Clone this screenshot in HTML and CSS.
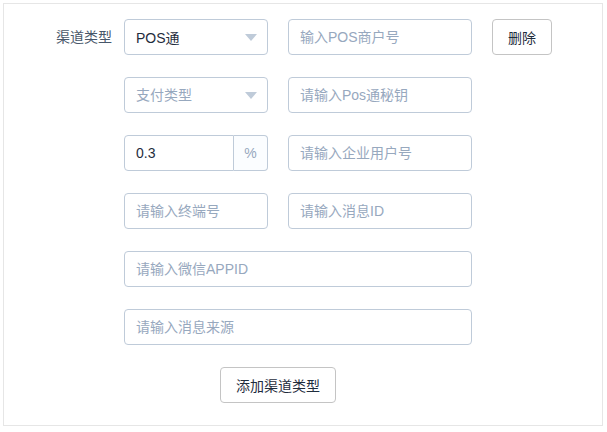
FILE: index.html
```html
<!DOCTYPE html>
<html lang="zh-CN">
<head>
    <meta charset="UTF-8">
    <meta name="viewport" content="width=device-width, initial-scale=1.0">
    <title>渠道类型</title>
    <link rel="stylesheet" href="styles.css">
</head>
<body>
    <div class="panel">
        <div class="form-row">
            <label class="form-label">渠道类型</label>
            <div class="select narrow">
                <input type="text" class="field" value="POS通" readonly>
                <span class="arrow"></span>
            </div>
            <input type="text" class="field wide" placeholder="输入POS商户号">
            <button class="btn">删除</button>
        </div>

        <div class="form-row">
            <span class="form-label"></span>
            <div class="select narrow">
                <input type="text" class="field" placeholder="支付类型" readonly>
                <span class="arrow"></span>
            </div>
            <input type="text" class="field wide" placeholder="请输入Pos通秘钥">
        </div>

        <div class="form-row">
            <span class="form-label"></span>
            <div class="input-group narrow">
                <input type="text" class="field" value="0.3">
                <span class="suffix">%</span>
            </div>
            <input type="text" class="field wide" placeholder="请输入企业用户号">
        </div>

        <div class="form-row">
            <span class="form-label"></span>
            <input type="text" class="field narrow" placeholder="请输入终端号">
            <input type="text" class="field wide" placeholder="请输入消息ID">
        </div>

        <div class="form-row">
            <span class="form-label"></span>
            <input type="text" class="field full" placeholder="请输入微信APPID">
        </div>

        <div class="form-row">
            <span class="form-label"></span>
            <input type="text" class="field full" placeholder="请输入消息来源">
        </div>

        <div class="actions">
            <button class="btn add">添加渠道类型</button>
        </div>
    </div>
</body>
</html>
```

FILE: styles.css
```css
body {
    margin: 0;
    font-family: "Liberation Sans", "Noto Sans CJK SC", sans-serif;
    font-size: 14px;
    background: #fff;
}
.panel {
    margin: 3px;
    width: 598px;
    height: 406px;
    border: 1px solid #e6e6e6;
    padding-top: 15px;
    box-sizing: content-box;
}
.form-row {
    display: flex;
    align-items: center;
    gap: 20px;
    height: 36px;
    margin-bottom: 22px;
}
.form-label {
    width: 108px;
    margin-right: -8px;
    text-align: right;
    color: #48576a;
    line-height: 36px;
}
.field {
    height: 36px;
    box-sizing: border-box;
    border: 1px solid #bfcbd9;
    border-radius: 4px;
    padding: 0 11px;
    font-family: inherit;
    font-size: 14px;
    color: #1f2d3d;
    outline: none;
    background: #fff;
}
.field::placeholder {
    color: #97a8be;
}
.narrow {
    width: 144px;
}
.wide {
    width: 184px;
}
.full {
    width: 348px;
}
.select {
    position: relative;
    height: 36px;
}
.select .field {
    width: 100%;
}
.arrow {
    position: absolute;
    right: 11px;
    top: 15px;
    width: 0;
    height: 0;
    border-left: 6px solid transparent;
    border-right: 6px solid transparent;
    border-top: 7px solid #bfcbd9;
}
.input-group {
    display: flex;
    height: 36px;
}
.input-group .field {
    flex: 1;
    min-width: 0;
    border-radius: 4px 0 0 4px;
}
.suffix {
    width: 34px;
    box-sizing: border-box;
    border: 1px solid #bfcbd9;
    border-left: none;
    border-radius: 0 4px 4px 0;
    background: #fbfdff;
    color: #97a8be;
    display: flex;
    align-items: center;
    justify-content: center;
}
.btn {
    height: 36px;
    padding: 0 15px;
    border: 1px solid #c4c4c4;
    border-radius: 4px;
    background: #fff;
    color: #1f2d3d;
    font-family: inherit;
    font-size: 14px;
    cursor: pointer;
}
.actions {
    padding-left: 216px;
}
.add {
    width: 116px;
    padding: 0;
}
```
